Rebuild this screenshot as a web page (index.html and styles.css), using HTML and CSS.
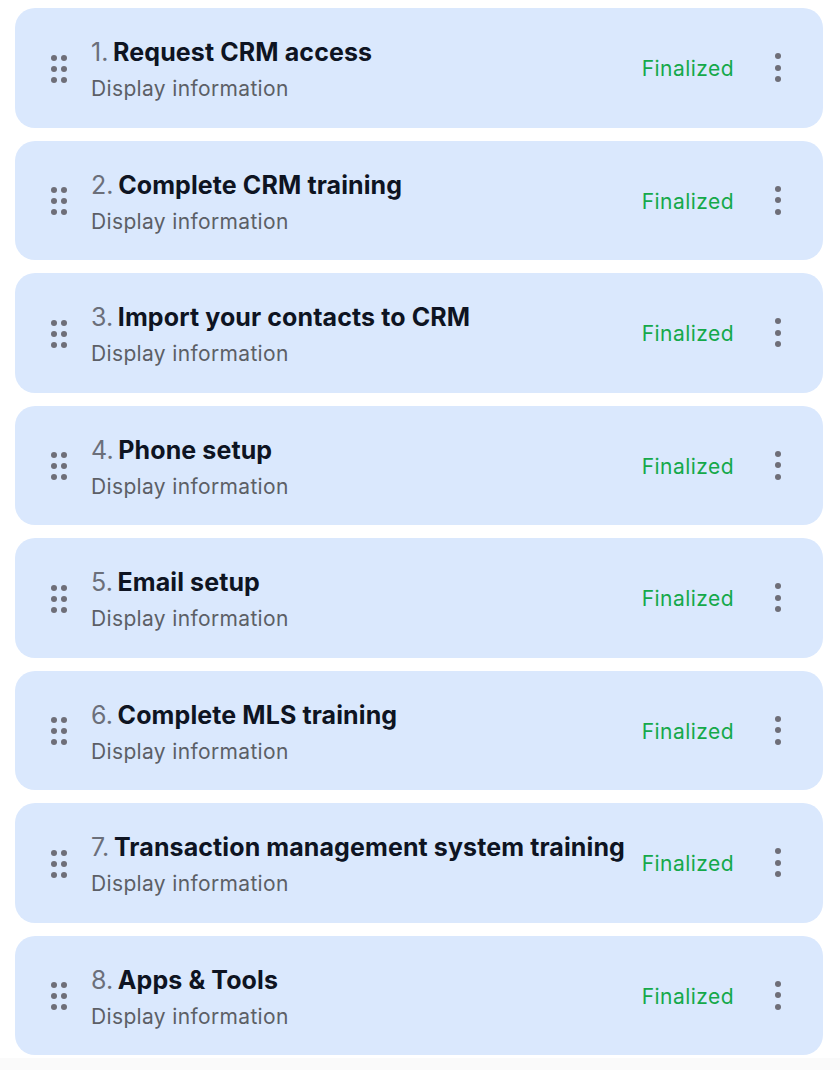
FILE: index.html
```html
<!DOCTYPE html>
<html lang="en">
<head>
    <meta charset="UTF-8">
    <meta name="viewport" content="width=device-width, initial-scale=1.0">
    <title>Onboarding steps</title>
    <link rel="stylesheet" href="styles.css">
</head>
<body>
    <div class="steps">
        <div class="step">
            <span class="drag"><i></i><i></i><i></i><i></i><i></i><i></i></span>
            <div class="info">
                <div class="title"><span class="num">1.</span> Request CRM access</div>
                <div class="sub">Display information</div>
            </div>
            <span class="status">Finalized</span>
            <span class="more"><i></i><i></i><i></i></span>
        </div>
        <div class="step">
            <span class="drag"><i></i><i></i><i></i><i></i><i></i><i></i></span>
            <div class="info">
                <div class="title"><span class="num">2.</span> Complete CRM training</div>
                <div class="sub">Display information</div>
            </div>
            <span class="status">Finalized</span>
            <span class="more"><i></i><i></i><i></i></span>
        </div>
        <div class="step">
            <span class="drag"><i></i><i></i><i></i><i></i><i></i><i></i></span>
            <div class="info">
                <div class="title"><span class="num">3.</span> Import your contacts to CRM</div>
                <div class="sub">Display information</div>
            </div>
            <span class="status">Finalized</span>
            <span class="more"><i></i><i></i><i></i></span>
        </div>
        <div class="step">
            <span class="drag"><i></i><i></i><i></i><i></i><i></i><i></i></span>
            <div class="info">
                <div class="title"><span class="num">4.</span> Phone setup</div>
                <div class="sub">Display information</div>
            </div>
            <span class="status">Finalized</span>
            <span class="more"><i></i><i></i><i></i></span>
        </div>
        <div class="step">
            <span class="drag"><i></i><i></i><i></i><i></i><i></i><i></i></span>
            <div class="info">
                <div class="title"><span class="num">5.</span> Email setup</div>
                <div class="sub">Display information</div>
            </div>
            <span class="status">Finalized</span>
            <span class="more"><i></i><i></i><i></i></span>
        </div>
        <div class="step">
            <span class="drag"><i></i><i></i><i></i><i></i><i></i><i></i></span>
            <div class="info">
                <div class="title"><span class="num">6.</span> Complete MLS training</div>
                <div class="sub">Display information</div>
            </div>
            <span class="status">Finalized</span>
            <span class="more"><i></i><i></i><i></i></span>
        </div>
        <div class="step">
            <span class="drag"><i></i><i></i><i></i><i></i><i></i><i></i></span>
            <div class="info">
                <div class="title"><span class="num">7.</span> Transaction management system training</div>
                <div class="sub">Display information</div>
            </div>
            <span class="status">Finalized</span>
            <span class="more"><i></i><i></i><i></i></span>
        </div>
        <div class="step">
            <span class="drag"><i></i><i></i><i></i><i></i><i></i><i></i></span>
            <div class="info">
                <div class="title"><span class="num">8.</span> Apps &amp; Tools</div>
                <div class="sub">Display information</div>
            </div>
            <span class="status">Finalized</span>
            <span class="more"><i></i><i></i><i></i></span>
        </div>
    </div>
</body>
</html>
```

FILE: styles.css
```css
body {
    margin: 0;
    font-family: Inter, "Noto Sans", sans-serif;
    background-color: #fafafa;
}

.steps {
    background: #fff;
    display: flex;
    flex-direction: column;
    gap: 13px;
    padding: 8px 17px 3px 15px;
}

.step {
    height: 119.5px;
    box-sizing: border-box;
    background: #dae8fd;
    border-radius: 20px;
    display: flex;
    align-items: center;
    padding: 0 42px 0 36px;
}

.drag {
    display: grid;
    grid-template-columns: 6px 6px;
    gap: 5px 4px;
    margin-right: 24px;
    margin-top: 2px;
}

.drag i,
.more i {
    display: block;
    width: 6px;
    height: 6px;
    border-radius: 50%;
    background: #6e6e78;
}

.info {
    flex: 1;
    padding-top: 5px;
}

.title {
    font-size: 25px;
    font-weight: 700;
    letter-spacing: 0.1px;
    color: #0e1422;
    line-height: 30px;
}

.num {
    font-weight: 400;
    color: #6b6f7a;
    margin-right: -1.5px;
}

.sub {
    font-size: 21px;
    letter-spacing: 0.35px;
    color: #5c5f66;
    line-height: 28px;
    margin-top: 8px;
}

.status {
    font-size: 21px;
    letter-spacing: 0.45px;
    color: #15a94a;
    margin-right: 41px;
    margin-top: 2px;
}

.more {
    display: flex;
    flex-direction: column;
    gap: 5.5px;
}
```
